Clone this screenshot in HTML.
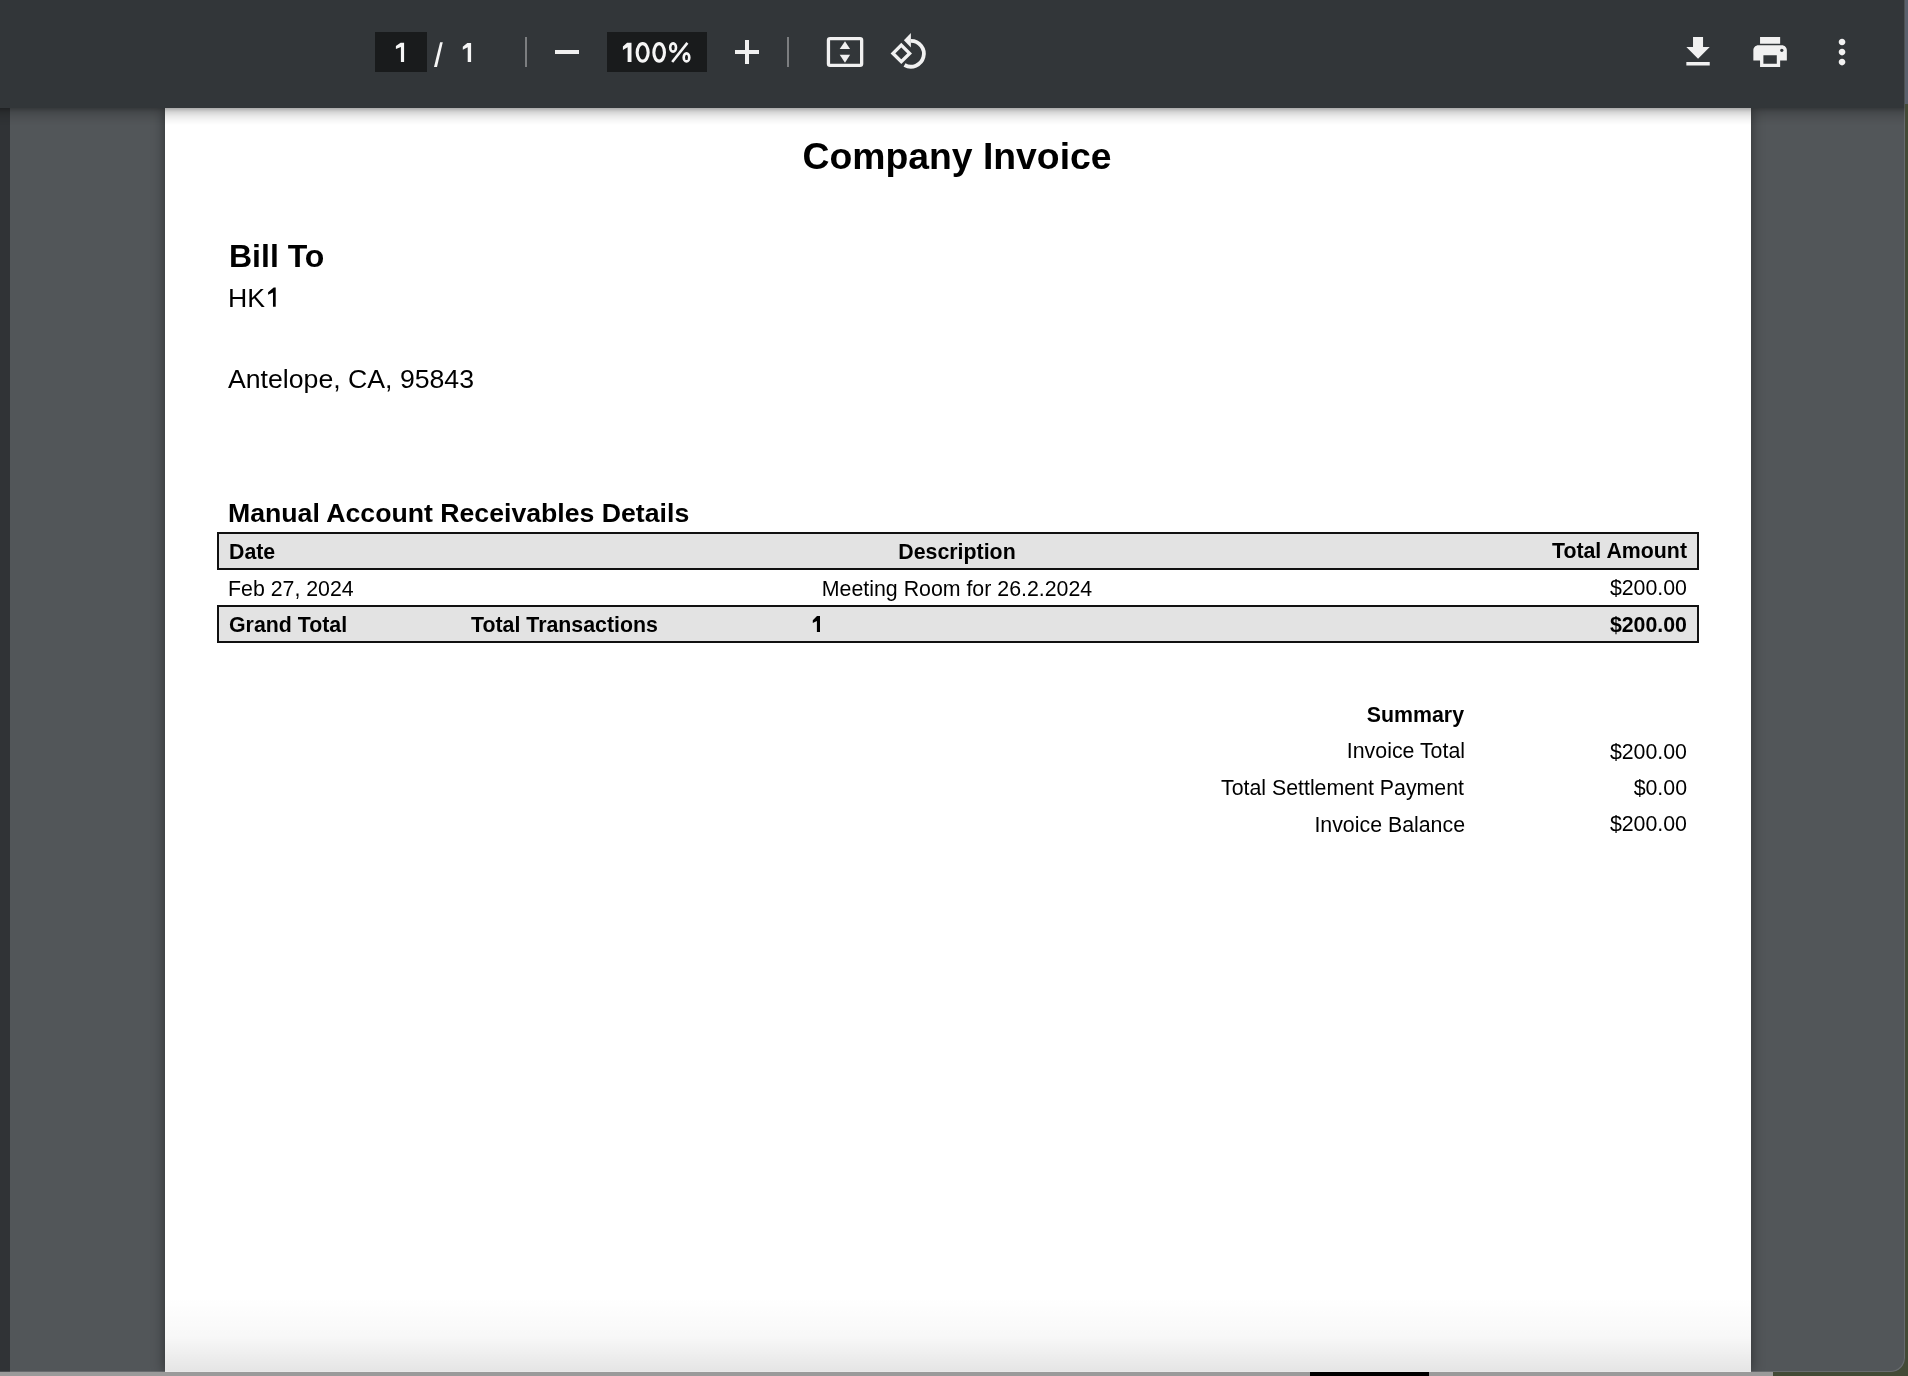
<!DOCTYPE html>
<html>
<head>
<meta charset="utf-8">
<title>Company Invoice</title>
<style>
html,body{margin:0;padding:0;}
body{width:1908px;height:1376px;overflow:hidden;position:relative;background:#434a36;font-family:"Liberation Sans",sans-serif;}
.abs{position:absolute;}
#strip{left:0;top:1371px;width:1773px;height:5px;background:#9a9a9a;}
#strip2{left:1310px;top:1371px;width:119px;height:5px;background:#000;}
#rightedge{left:1904px;top:0;width:4px;height:104px;background:#59606c;}
#win{left:0;top:0;width:1905px;height:1372px;background:#525659;border-bottom-right-radius:14px;overflow:hidden;}
#leftstrip{left:0;top:0;width:10px;height:1372px;background:#303336;}
#toolbar{left:0;top:0;width:1905px;height:108px;background:#323639;z-index:5;}
#tshadow{left:0;top:108px;width:1905px;height:17px;z-index:4;background:linear-gradient(to bottom,rgba(0,0,0,0.33) 0px,rgba(0,0,0,0.17) 4px,rgba(0,0,0,0.09) 8px,rgba(0,0,0,0.04) 12px,rgba(0,0,0,0) 17px);}
#page{left:165px;top:108px;width:1586px;height:1264px;background:#fff;box-shadow:0 0 12px rgba(0,0,0,0.45);
  background-image:linear-gradient(to bottom,rgba(0,0,0,0) 1190px,rgba(0,0,0,0.03) 1230px,rgba(0,0,0,0.1) 1263px);}
.pbox{background:#191b1c;height:40px;top:32px;}
.tbt{color:#f1f1f1;font-size:28px;line-height:40px;top:32px;white-space:nowrap;-webkit-text-stroke:0.4px #f1f1f1;}
.sep{width:2px;top:37px;height:30px;background:#7c7e80;}
.t{position:absolute;white-space:nowrap;color:#000;line-height:1;z-index:2;will-change:transform;}
.b{font-weight:bold;}
.tbl{position:absolute;left:217px;width:1478px;height:34px;border:2px solid #111;background:#e3e3e3;z-index:1;}
svg{position:absolute;left:0;top:0;}
</style>
</head>
<body>
<div id="strip" class="abs"></div>
<div id="strip2" class="abs"></div>
<div id="rightedge" class="abs"></div>
<div id="win" class="abs">
  <div id="leftstrip" class="abs"></div>
  
  <div id="page" class="abs"></div>
  <div class="tbl" style="top:532px;"></div>
  <div class="tbl" style="top:605px;"></div>
<div id="title" class="t b" style="left:357.00px;width:1200px;text-align:center;top:137.99px;font-size:37.33px;">Company Invoice</div>
<div id="billto" class="t b" style="left:228.60px;top:239.81px;font-size:32px;">Bill To</div>
<div id="hk1" class="t" style="left:228.40px;top:285.22px;font-size:26.67px;">HK</div>
<div id="addr" class="t" style="left:227.80px;top:365.62px;font-size:26.67px;">Antelope, CA, 95843</div>
<div id="manual" class="t b" style="left:228.12px;top:500.42px;font-size:26.67px;">Manual Account Receivables Details</div>
<div id="date" class="t b" style="left:229.12px;top:541.94px;font-size:21.33px;">Date</div>
<div id="desc" class="t b" style="left:357.30px;width:1200px;text-align:center;top:541.74px;font-size:21.33px;">Description</div>
<div id="tamt" class="t b" style="left:686.60px;width:1000px;text-align:right;top:541.34px;font-size:21.33px;">Total Amount</div>
<div id="feb" class="t" style="left:228.00px;top:578.94px;font-size:21.33px;">Feb 27, 2024</div>
<div id="meet" class="t" style="left:357.20px;width:1200px;text-align:center;top:578.94px;font-size:21.33px;">Meeting Room for 26.2.2024</div>
<div id="amt1" class="t" style="left:687.00px;width:1000px;text-align:right;top:578.14px;font-size:21.33px;">$200.00</div>
<div id="gt" class="t b" style="left:228.80px;top:614.54px;font-size:21.33px;">Grand Total</div>
<div id="tt" class="t b" style="left:471.20px;top:614.94px;font-size:21.33px;">Total Transactions</div>
<div id="gamt" class="t b" style="left:687.00px;width:1000px;text-align:right;top:614.94px;font-size:21.33px;">$200.00</div>
<div id="summ" class="t b" style="left:464.00px;width:1000px;text-align:right;top:704.74px;font-size:21.33px;">Summary</div>
<div id="invt" class="t" style="left:465.00px;width:1000px;text-align:right;top:741.34px;font-size:21.33px;">Invoice Total</div>
<div id="tsp" class="t" style="left:464.40px;width:1000px;text-align:right;top:777.54px;font-size:21.33px;">Total Settlement Payment</div>
<div id="invb" class="t" style="left:465.00px;width:1000px;text-align:right;top:814.94px;font-size:21.33px;">Invoice Balance</div>
<div id="s1" class="t" style="left:687.00px;width:1000px;text-align:right;top:741.54px;font-size:21.33px;">$200.00</div>
<div id="s2" class="t" style="left:687.00px;width:1000px;text-align:right;top:777.54px;font-size:21.33px;">$0.00</div>
<div id="s3" class="t" style="left:687.00px;width:1000px;text-align:right;top:814.14px;font-size:21.33px;">$200.00</div>
  <svg width="1908" height="1376" viewBox="0 0 1908 1376" style="z-index:3;">
    <path d="M275.7 306.8 L275.7 287.4 L273.7 287.4 L268.1 292.3 L268.1 294.7 L272.97 292.5 L272.97 306.8 Z" fill="#000"/>
    <path d="M820 631.9 L820 615.9 L817 615.9 L812.8 620.2 L812.8 623.1 L816.9 620.9 L816.9 631.9 Z" fill="#000"/>
  </svg>
  <div id="tshadow" class="abs"></div>
  <div id="toolbar" class="abs">
    <div class="abs pbox" style="left:375px;width:52px;"></div>
    <div class="abs sep" style="left:525px;"></div>
    <div class="abs" style="left:555px;top:50px;width:24px;height:4px;background:#f1f1f1;"></div>
    <div class="abs pbox" style="left:607px;width:100px;"></div>
    <div class="abs" style="left:735px;top:50px;width:24px;height:4px;background:#f1f1f1;"></div>
    <div class="abs" style="left:745px;top:40px;width:4px;height:24px;background:#f1f1f1;"></div>
    <div class="abs sep" style="left:787px;"></div>
    <svg width="1905" height="108" viewBox="0 0 1905 108">
      <g fill="#f6f6f6">
        <path d="M404.1 62 L404.1 42.8 L400.6 42.8 L395.9 46.1 L395.9 49.1 L400.9 46.95 L400.9 62 Z"/>
        <path d="M440.1 42.3 L442.8 42.3 L437 66.9 L434 66.9 Z"/>
        <path d="M471.1 62 L471.1 42.9 L467.3 42.9 L462.8 46.7 L462.8 49.8 L467.7 47.3 L467.7 62 Z"/>
        <path d="M631.5 62.1 L631.5 42.7 L627.1 42.7 L622.9 46.4 L622.9 49.9 L627.6 47.3 L627.6 62.1 Z"/>
        <ellipse cx="642.65" cy="52.4" rx="5.5" ry="8.75" fill="none" stroke="#f6f6f6" stroke-width="3.1"/>
        <ellipse cx="659.15" cy="52.4" rx="5.3" ry="8.75" fill="none" stroke="#f6f6f6" stroke-width="3.1"/>
        <ellipse cx="673.1" cy="47.5" rx="2.9" ry="4.1" fill="none" stroke="#f6f6f6" stroke-width="2.6"/>
        <ellipse cx="686.5" cy="57.4" rx="2.8" ry="4.0" fill="none" stroke="#f6f6f6" stroke-width="2.6"/>
        <path d="M672.2 62 L687.4 42.9" stroke="#f6f6f6" stroke-width="2.6"/>
      </g>
      <g fill="#f1f1f1">
        <rect x="828.45" y="38.55" width="33.2" height="26.8" rx="1.6" fill="none" stroke="#f1f1f1" stroke-width="3.3"/>
        <path d="M839.7 49 L850.1 49 L845 41.3 Z"/>
        <path d="M839.7 54.8 L850.1 54.8 L845 62.8 Z"/>
        <path d="M901.3 45.1 L909.6 53.4 L901.3 61.7 L893 53.4 Z" fill="none" stroke="#f1f1f1" stroke-width="3.4"/>
        <path d="M910.95 40.8 A12.95 12.95 0 1 1 904.5 65.0" fill="none" stroke="#f1f1f1" stroke-width="3.8"/>
        <path d="M903.9 40.2 L910.9 33 L910.9 47.4 Z"/>
        <g transform="translate(1678 32) scale(1.67)"><path d="M19 9h-4V3H9v6H5l7 7 7-7zM5 18v2h14v-2H5z"/></g>
        <g transform="translate(1750 31.9) scale(1.675)"><path d="M19 8H5c-1.66 0-3 1.34-3 3v6h4v4h12v-4h4v-6c0-1.66-1.34-3-3-3zm-3 11H8v-5h8v5zm3-7c-.55 0-1-.45-1-1s.45-1 1-1 1 .45 1 1-.45 1-1 1zm-1-9H6v4h12V3z"/></g>
        <g transform="translate(1822 32) scale(1.67)"><path d="M12 8c1.1 0 2-.9 2-2s-.9-2-2-2-2 .9-2 2 .9 2 2 2zm0 2c-1.1 0-2 .9-2 2s.9 2 2 2 2-.9 2-2-.9-2-2-2zm0 6c-1.1 0-2 .9-2 2s.9 2 2 2 2-.9 2-2-.9-2-2-2z"/></g>
      </g>
    </svg>
  </div>
  <div class="abs" style="left:0;top:0;width:1905px;height:1372px;border-bottom-right-radius:14px;box-shadow:inset -1px -1px 0 rgba(255,255,255,0.13);z-index:7;pointer-events:none;"></div>
</div>
</body>
</html>
